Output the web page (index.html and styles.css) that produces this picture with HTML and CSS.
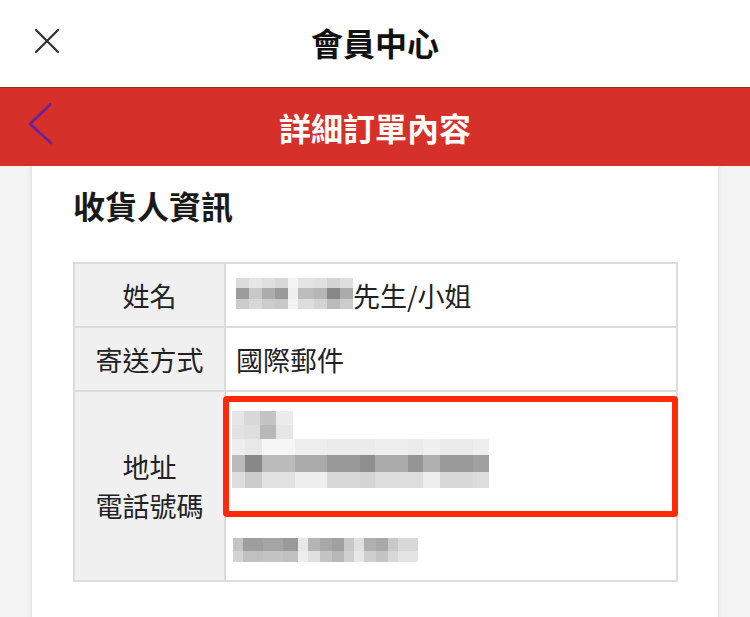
FILE: index.html
```html
<!DOCTYPE html>
<html lang="zh-Hant">
<head>
<meta charset="utf-8">
<title>詳細訂單內容</title>
<link rel="stylesheet" href="styles.css">
</head>
<body>
<header class="topbar">
  <button class="close-btn" aria-label="關閉">
    <svg width="26" height="26" viewBox="0 0 26 26"><path d="M2 2 L24 24 M24 2 L2 24" stroke="#333" stroke-width="2.3" fill="none" stroke-linecap="round"/></svg>
  </button>
  <h1 class="topbar-title">會員中心</h1>
</header>
<nav class="subbar">
  <button class="back-btn" aria-label="返回">
    <svg width="26" height="42" viewBox="0 0 26 42"><path d="M23 1.5 L3 21 L24 40" stroke="#6a1f9c" stroke-width="2.6" fill="none" stroke-linecap="round" stroke-linejoin="round"/></svg>
  </button>
  <h2 class="subbar-title">詳細訂單內容</h2>
</nav>
<main class="page">
  <section class="card">
    <h3 class="section-title">收貨人資訊</h3>
    <table class="info">
      <tr class="row-short">
        <th>姓名</th>
        <td><div class="name-line"><span class="mosaic mosaic-a"><i class="ma1"></i><i class="ma2"></i><i class="ma3"></i></span><span>先生/小姐</span></div></td>
      </tr>
      <tr class="row-short">
        <th>寄送方式</th>
        <td>國際郵件</td>
      </tr>
      <tr class="row-tall">
        <th>地址<br>電話號碼</th>
        <td class="addr-cell">
          <div class="mosaic mosaic-b"><i class="mb1"></i><i class="mb2"></i></div>
          <div class="mosaic mosaic-c"><i class="mc1"></i><i class="mc2"></i><i class="mc3"></i></div>
          <div class="mosaic mosaic-d"><i class="md1"></i><i class="md2"></i></div>
          <div class="highlight"></div>
        </td>
      </tr>
    </table>
  </section>
</main>
</body>
</html>
```
FILE: styles.css
```css
* { box-sizing: border-box; }
html, body { margin: 0; padding: 0; }
body {
  width: 750px;
  height: 617px;
  overflow: hidden;
  background: #f3f3f3;
  font-family: "Noto Sans CJK TC", "Noto Sans", sans-serif;
  color: #222;
}
button { background: none; border: 0; padding: 0; cursor: pointer; }

.topbar {
  height: 87px;
  padding-bottom: 3px;
  background: #fff;
  display: flex;
  align-items: center;
  justify-content: center;
  position: relative;
}
.close-btn {
  position: absolute;
  left: 34px;
  top: 28px;
  width: 26px;
  height: 26px;
  display: flex;
}
.topbar-title {
  margin: 0;
  font-size: 32px;
  font-weight: 700;
  color: #111;
  line-height: 1;
}

.subbar {
  height: 79px;
  background: #d5302a;
  border-top: 1px solid #9a2a22;
  display: flex;
  align-items: center;
  justify-content: center;
  position: relative;
}
.back-btn {
  position: absolute;
  left: 27px;
  top: 15px;
  width: 26px;
  height: 42px;
  display: flex;
}
.subbar-title {
  margin: 0;
  font-size: 32px;
  font-weight: 700;
  color: #fff;
  line-height: 1;
}

.page {
  padding: 0 32px;
}
.card {
  background: #fff;
  min-height: 480px;
  padding: 20px 41px 0;
  box-shadow: 0 0 5px rgba(0,0,0,0.12);
}
.section-title {
  margin: 0 0 38px;
  font-size: 32px;
  font-weight: 700;
  line-height: 38px;
  color: #1a1a1a;
}

.info {
  width: 605px;
  border-collapse: collapse;
  border: 2px solid #dcdcdc;
  font-size: 27px;
}
.info th, .info td {
  border: 2px solid #dcdcdc;
  font-weight: 400;
  line-height: 39px;
}
.info th {
  width: 151px;
  background: #f0f0f0;
  text-align: center;
  padding: 0;
}
.info td {
  text-align: left;
  padding: 0 10px;
}
.row-short { height: 64px; }
.row-tall { height: 190px; }

.name-line {
  display: flex;
  align-items: center;
}
.mosaic { display: block; }
.mosaic i { display: block; }
.mosaic-a { width: 117px; margin-top: -3px; }
.mosaic-a i { height: 10px; }
.ma1 { background: linear-gradient(90deg, #dcdcdc 0 13px, #e6e6e6 13px 26px, #e0e0e0 26px 39px, #d8d8d8 39px 52px, #f3f3f3 52px 62px, #e4e4e4 62px 78px, #e0e0e0 78px 91px, #d4d4d4 91px 104px, #dedede 104px 117px); }
.ma2 { background: linear-gradient(90deg, #9c9c9c 0 13px, #c8c8c8 13px 26px, #acacac 26px 39px, #9a9a9a 39px 52px, #f0f0f0 52px 62px, #bcbcbc 62px 78px, #b5b5b5 78px 91px, #888 91px 104px, #aaa 104px 117px); height: 11px !important; }
.ma3 { background: linear-gradient(90deg, #cccccc 0 13px, #d8d8d8 13px 26px, #cccccc 26px 39px, #c8c8c8 39px 52px, #f3f3f3 52px 62px, #dddddd 62px 78px, #d4d4d4 78px 91px, #bbbbbb 91px 104px, #cccccc 104px 117px); }

.addr-cell {
  position: relative;
  vertical-align: top;
  padding: 19px 12px 0 6px !important;
}
.mosaic-b { width: 61px; }
.mosaic-b i { height: 14px; }
.mb1 { background: linear-gradient(90deg, #e6e6e6 0 12px, #d8d8d8 12px 28px, #c4c4c4 28px 44px, #ececec 44px 61px); }
.mb2 { background: linear-gradient(90deg, #e2e2e2 0 12px, #dedede 12px 28px, #b8b8b8 28px 44px, #e6e6e6 44px 61px); }

.mosaic-c { width: 257px; }
.mosaic-c i { height: 16px; }
.mc1 { background: linear-gradient(90deg, #eeeeee 0 13px, #e8e8e8 13px 30px, #f6f6f6 30px 63px, #eeeeee 63px 95px, #ebebeb 95px 143px, #eeeeee 143px 176px, #ebebeb 176px 191px, #f0f0f0 191px 208px, #ebebeb 208px 241px, #eeeeee 241px 257px); }
.mc2 { background: linear-gradient(90deg, #bbbbbb 0 13px, #888888 13px 30px, #bbbbbb 30px 63px, #aaaaaa 63px 95px, #999999 95px 128px, #8f8f8f 128px 143px, #aaaaaa 143px 176px, #959595 176px 191px, #b0b0b0 191px 208px, #9a9a9a 208px 241px, #a0a0a0 241px 257px); height: 17px !important; }
.mc3 { background: linear-gradient(90deg, #dddddd 0 13px, #cccccc 13px 30px, #e2e2e2 30px 63px, #eeeeee 63px 95px, #d8d8d8 95px 128px, #d4d4d4 128px 143px, #dddddd 143px 176px, #dddddd 176px 191px, #eeeeee 191px 208px, #d8d8d8 208px 241px, #dddddd 241px 257px); }

.mosaic-d { width: 185px; margin-top: 50px; margin-left: 1px; }
.mosaic-d i { height: 13px; }
.md1 { background: linear-gradient(90deg, #c4c4c4 0 10px, #9e9e9e 10px 30px, #a5a5a5 30px 50px, #9a9a9a 50px 65px, #e8e8e8 65px 75px, #b5b5b5 75px 87px, #a8a8a8 87px 99px, #a0a0a0 99px 111px, #c8c8c8 111px 121px, #e0e0e0 121px 131px, #b0b0b0 131px 143px, #a8a8a8 143px 155px, #c8c8c8 155px 165px, #d8d8d8 165px 185px); }
.md2 { background: linear-gradient(90deg, #d4d4d4 0 10px, #c0c0c0 10px 30px, #c4c4c4 30px 50px, #c0c0c0 50px 65px, #eeeeee 65px 75px, #e0e0e0 75px 87px, #c4c4c4 87px 99px, #b8b8b8 99px 111px, #d0d0d0 111px 121px, #e8e8e8 121px 131px, #cfcfcf 131px 143px, #c4c4c4 143px 155px, #d8d8d8 155px 165px, #e4e4e4 165px 185px); height: 11px !important; }

.highlight {
  position: absolute;
  left: -3px;
  top: 4px;
  right: -2px;
  height: 121px;
  border: 6px solid #ff2a0a;
  border-radius: 4px;
  pointer-events: none;
}
```
